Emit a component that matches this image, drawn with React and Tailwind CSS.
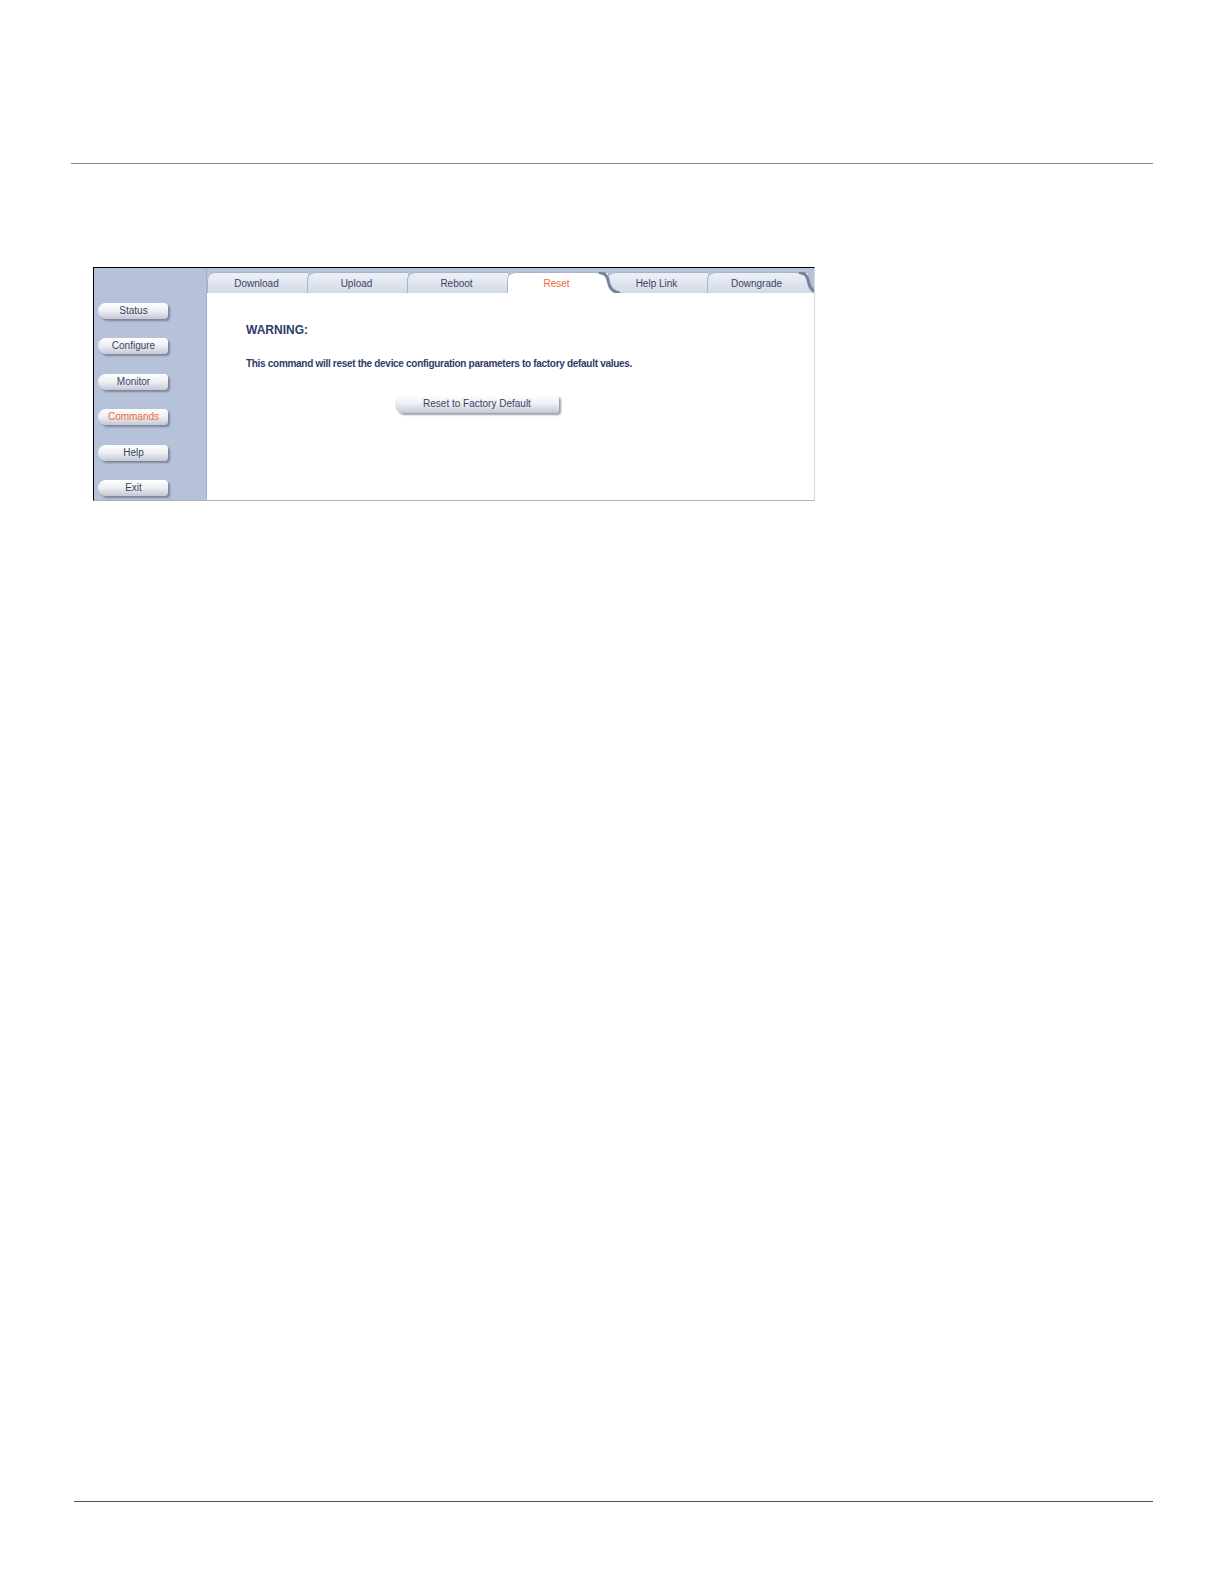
import React from "react";

const font = { fontFamily: '"Liberation Sans", Arial, sans-serif' };

function SideButton({ label, active }) {
  return (
    <div className="relative h-[16px] w-[70px]">
      <div className="absolute inset-0 rounded-l-[8px] rounded-r-[4px] bg-gradient-to-b from-[#ffffff] via-[#eceef3] to-[#c3c8d3] shadow-[2px_2px_2px_rgba(60,60,80,0.45)]" />
      <div
        className={`relative flex h-full items-center justify-center pl-[1px] text-[10px] leading-none ${
          active ? "text-[#ec6d36]" : "text-[#3b4262]"
        }`}
      >
        {label}
      </div>
    </div>
  );
}

function Tab({ label, active, swoosh }) {
  return (
    <div className={`relative -mr-[1px] h-[21px] w-[101px] ${active ? "z-10" : ""}`}>
      <svg
        className="absolute left-0 top-0"
        width="116"
        height="21"
        viewBox="0 0 116 21"
      >
        <defs>
          <linearGradient id="tg" x1="0" y1="0" x2="0" y2="1">
            <stop offset="0" stopColor="#eef1f7" />
            <stop offset="1" stopColor="#d2d9e7" />
          </linearGradient>
        </defs>
        <path
          d="M0 21 L0 9 C0 3 4 0.5 10 0.5 L101 0.5 L101 21 Z"
          fill={active ? "#ffffff" : "url(#tg)"}
        />
        <path
          d="M0.5 21 L0.5 9 C0.5 3 4 0.5 10 0.5 L101 0.5"
          fill="none"
          stroke="#a9b4ca"
          strokeWidth="1"
        />
        {swoosh && (
          <path
            d="M92 0.5 C98 0.5 100 4 101 9 C102 15 104 19 111 21 L96 21 L96 0.5 Z"
            fill={active ? "#ffffff" : "url(#tg)"}
          />
        )}
        {swoosh && (
          <path
            d="M93 0.8 C99 1.2 100.5 5 101.5 10 C102.5 16 105.5 19.8 112 21"
            fill="none"
            stroke="#76829e"
            strokeWidth="3"
            strokeLinecap="round"
          />
        )}
      </svg>
      <div
        className={`relative flex h-full items-center justify-center pr-[2px] pt-[2px] text-[10px] leading-none ${
          active ? "text-[#ec6d36]" : "text-[#3b4262]"
        }`}
      >
        {label}
      </div>
    </div>
  );
}

export default function App() {
  const side = ["Status", "Configure", "Monitor", "Commands", "Help", "Exit"];
  const tabs = ["Download", "Upload", "Reboot", "Reset", "Help Link", "Downgrade"];
  return (
    <div className="bg-white" style={font}>
      <div className="pt-[163px]">
        <div className="ml-[71px] h-px w-[1082px] bg-[#8a8a8a]" />
      </div>

      <div className="ml-[93px] mt-[103px] flex h-[234px] w-[722px] border-t border-l border-black border-r border-r-[#d8d8d8] border-b border-b-[#b0b0b0]">
        <div className="flex w-[113px] flex-col gap-[19.4px] border-r border-r-[#a4b0c8] bg-[#b6c2da] pl-[4px] pt-[35px]">
          {side.map((s) => (
            <SideButton key={s} label={s} active={s === "Commands"} />
          ))}
        </div>
        <div className="flex flex-1 flex-col overflow-hidden">
          <div className="flex h-[25px] items-end bg-[#b6c2da] pt-[4px]">
            {tabs.map((t, i) => (
              <Tab
                key={t}
                label={t}
                active={t === "Reset"}
                swoosh={t === "Reset" || i === tabs.length - 1}
              />
            ))}
          </div>
          <div className="flex-1 bg-white pl-[39px] pt-[30px]">
            <div className="text-[12px] font-bold leading-[14px] text-[#2f3b68]">
              WARNING:
            </div>
            <div className="mt-[21px] text-[10px] font-bold leading-[12px] tracking-[-0.3px] text-[#2f3b68]">
              This command will reset the device configuration parameters to factory default values.
            </div>
            <div className="relative ml-[149px] mt-[25px] h-[18px] w-[164px]">
              <div className="absolute inset-0 rounded-l-[8px] rounded-r-[4px] bg-gradient-to-b from-[#ffffff] via-[#eceef3] to-[#c3c8d3] shadow-[2px_2px_2px_rgba(60,60,80,0.5)]" />
              <div className="relative flex h-full items-center justify-center text-[10px] leading-none text-[#3b4262]">
                Reset to Factory Default
              </div>
            </div>
          </div>
        </div>
      </div>

      <div className="mt-[1000px] ml-[74px] h-px w-[1079px] bg-[#555555]" />
    </div>
  );
}
